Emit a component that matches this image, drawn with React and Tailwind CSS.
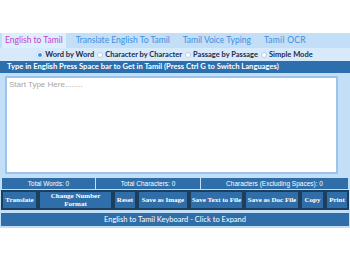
import React from 'react';

const tabs = ['English to Tamil', 'Translate English To Tamil', 'Tamil Voice Typing', 'Tamil OCR'];
const modes = ['Word by Word', 'Character by Character', 'Passage by Passage', 'Simple Mode'];

function Btn({ children, className = '' }) {
  return (
    <button
      className={`bg-[#2f6ea9] border-2 border-[#1d3f5e] text-white font-bold text-[7px] leading-[8px] px-0 overflow-hidden ${className}`}
      style={{ fontFamily: '"Liberation Serif", "Times New Roman", serif' }}
    >
      {children}
    </button>
  );
}

export default function App() {
  return (
    <div className="w-[350px] h-[263px] bg-white" style={{ fontFamily: 'Lato, "Noto Sans", sans-serif' }}>
      <div className="h-[33px]" />
      <div className="bg-[#c3def7] pb-[2px]">
        <div className="flex items-end h-[15px] pl-[2px] gap-[7px] text-[8.5px]">
          {tabs.map((t, i) => (
            <div
              key={t}
              className={`h-[15px] flex items-center px-[3px] ${i === 0 ? 'bg-[#ddeefc] text-[#c23fd0]' : 'text-[#3d8fdc]'} ${i === 3 ? 'tracking-[0.3px]' : ''}`}
            >
              {t}
            </div>
          ))}
        </div>
        <div className="bg-[#d7eafc] h-[13px] flex items-center justify-center gap-[3px] text-[7.5px] font-bold text-[#1b2b4a]">
          {modes.map((m, i) => (
            <label key={m} className="flex items-center gap-[2px] whitespace-nowrap">
              <span
                className={`shrink-0 w-[6px] h-[6px] rounded-full ${i === 0 ? 'bg-[#3b8fe0] border border-white ring-1 ring-[#c8dff5]' : 'bg-white border border-[#b9cde0]'}`}
              />
              {m}
            </label>
          ))}
        </div>
        <div className="bg-[#2d6fac] h-[12px] flex items-center pl-[7px] text-white font-bold text-[7.6px] whitespace-nowrap">
          Type in English Press Space bar to Get in Tamil (Press Ctrl G to Switch Languages)
        </div>
        <div className="px-[5px] pt-[3px] pb-[4px] pr-[12px]">
          <div className="h-[98px] bg-white border-2 border-[#9cc3ea] px-[2px] py-[1px] text-[8px] text-[#a6a6a6]" style={{ fontFamily: '"Liberation Sans", Arial, sans-serif' }}>
            Start Type Here........
          </div>
        </div>
        <div className="flex h-[11px] mx-[2px] gap-[1px] text-white text-[6.5px]" style={{ fontFamily: '"Liberation Sans", Arial, sans-serif' }}>
          <div className="w-[93px] bg-[#2f6ea9] flex items-center justify-center">Total Words: 0</div>
          <div className="w-[104px] bg-[#2f6ea9] flex items-center justify-center">Total Characters: 0</div>
          <div className="flex-1 bg-[#2f6ea9] flex items-center justify-center">Characters (Excluding Spaces): 0</div>
        </div>
        <div className="flex h-[20px] mx-[1px] mt-[1px] whitespace-nowrap">
          <Btn className="w-[37px]">Translate</Btn>
          <Btn className="w-[75px] whitespace-normal">Change Number<br />Format</Btn>
          <Btn className="w-[24px]">Reset</Btn>
          <Btn className="w-[52px]">Save as Image</Btn>
          <Btn className="w-[55px]">Save Text to File</Btn>
          <Btn className="w-[56px]">Save as Doc File</Btn>
          <Btn className="w-[25px]">Copy</Btn>
          <Btn className="w-[24px]">Print</Btn>
        </div>
        <div className="mx-[1px] mt-[3px] h-[13px] bg-[#2f6ea9] flex items-center justify-center text-white text-[7.5px]">
          English to Tamil Keyboard - Click to Expand
        </div>
      </div>
    </div>
  );
}
